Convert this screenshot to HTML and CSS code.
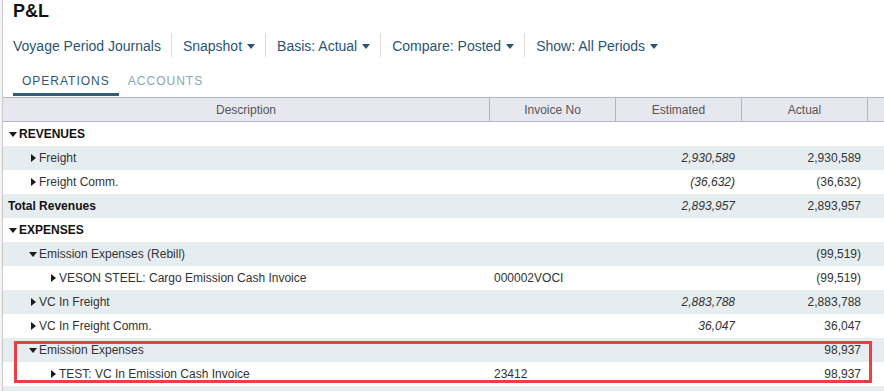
FILE: index.html
```html
<!DOCTYPE html>
<html>
  <head>
    <meta name="viewport" content="width=device-width, initial-scale=1" />
    <link rel="stylesheet" href="styles.css">
  </head>
  <body>
    <div class="page">
      <h1 class="title">P&amp;L</h1>

      <div class="toolbar">
        <span class="tool">Voyage Period Journals</span>
        <span class="tool">Snapshot <i class="caret"></i></span>
        <span class="tool">Basis: Actual <i class="caret"></i></span>
        <span class="tool">Compare: Posted <i class="caret"></i></span>
        <span class="tool">Show: All Periods <i class="caret"></i></span>
      </div>

      <div class="tabs">
        <span class="tab active">OPERATIONS</span>
        <span class="tab">ACCOUNTS</span>
      </div>

      <div class="grid">
        <div class="row head">
          <span class="c">Description</span>
          <span class="c">Invoice No</span>
          <span class="c">Estimated</span>
          <span class="c">Actual</span>
          <span class="c gut"></span>
        </div>

        <div class="row section">
          <span class="c desc lv0"><i class="tri down"></i>REVENUES</span>
          <span class="c inv"></span><span class="c est"></span><span class="c act"></span><span class="c gut"></span>
        </div>
        <div class="row">
          <span class="c desc lv1"><i class="tri right"></i>Freight</span>
          <span class="c inv"></span><span class="c est">2,930,589</span><span class="c act">2,930,589</span><span class="c gut"></span>
        </div>
        <div class="row">
          <span class="c desc lv1"><i class="tri right"></i>Freight Comm.</span>
          <span class="c inv"></span><span class="c est">(36,632)</span><span class="c act">(36,632)</span><span class="c gut"></span>
        </div>
        <div class="row total">
          <span class="c desc">Total Revenues</span>
          <span class="c inv"></span><span class="c est">2,893,957</span><span class="c act">2,893,957</span><span class="c gut"></span>
        </div>
        <div class="row section">
          <span class="c desc lv0"><i class="tri down"></i>EXPENSES</span>
          <span class="c inv"></span><span class="c est"></span><span class="c act"></span><span class="c gut"></span>
        </div>
        <div class="row">
          <span class="c desc lv1"><i class="tri down"></i>Emission Expenses (Rebill)</span>
          <span class="c inv"></span><span class="c est"></span><span class="c act">(99,519)</span><span class="c gut"></span>
        </div>
        <div class="row">
          <span class="c desc lv2"><i class="tri right"></i>VESON STEEL: Cargo Emission Cash Invoice</span>
          <span class="c inv">000002VOCI</span><span class="c est"></span><span class="c act">(99,519)</span><span class="c gut"></span>
        </div>
        <div class="row">
          <span class="c desc lv1"><i class="tri right"></i>VC In Freight</span>
          <span class="c inv"></span><span class="c est">2,883,788</span><span class="c act">2,883,788</span><span class="c gut"></span>
        </div>
        <div class="row">
          <span class="c desc lv1"><i class="tri right"></i>VC In Freight Comm.</span>
          <span class="c inv"></span><span class="c est">36,047</span><span class="c act">36,047</span><span class="c gut"></span>
        </div>
        <div class="row">
          <span class="c desc lv1"><i class="tri down"></i>Emission Expenses</span>
          <span class="c inv"></span><span class="c est"></span><span class="c act">98,937</span><span class="c gut"></span>
        </div>
        <div class="row">
          <span class="c desc lv2"><i class="tri right"></i>TEST: VC In Emission Cash Invoice</span>
          <span class="c inv">23412</span><span class="c est"></span><span class="c act">98,937</span><span class="c gut"></span>
        </div>
        <div class="row">
          <span class="c desc"></span>
          <span class="c inv"></span><span class="c est"></span><span class="c act"></span><span class="c gut"></span>
        </div>

        <div class="mark"></div>
      </div>
    </div>
  </body>
</html>
```

FILE: styles.css
```css
* {
  box-sizing: border-box;
}

body {
  margin: 0;
  background: #f3f3f3;
  font-family: "Liberation Sans", Arial, sans-serif;
  color: #333;
  height: 391px;
  overflow: hidden;
}

.page {
  margin-left: 2px;
  border-left: 1px solid #c9c9c9;
  background: #fff;
  min-height: 391px;
}

.title {
  margin: 0;
  padding-left: 10px;
  font-size: 18px;
  line-height: 22px;
  font-weight: bold;
  color: #111;
}

/* toolbar */
.toolbar {
  display: flex;
  margin-top: 11px;
  padding-left: 10px;
}

.tool {
  display: flex;
  align-items: center;
  height: 24px;
  padding: 2px 10px 0 11px;
  border-left: 1px solid #dcdcdc;
  font-size: 14px;
  color: #2b5573;
}

.tool:first-child {
  border-left: none;
  padding-left: 0;
}

.caret {
  display: inline-block;
  margin-left: 5px;
  border-left: 4px solid transparent;
  border-right: 4px solid transparent;
  border-top: 5px solid #2b5573;
}

/* tabs */
.tabs {
  display: flex;
  margin-top: 17px;
  padding-left: 10px;
}

.tab {
  padding: 0 9px 5px;
  font-size: 12px;
  line-height: 14px;
  letter-spacing: 1px;
  color: #8ba4b6;
  border-bottom: 3px solid transparent;
}

.tab.active {
  color: #2f5874;
  border-bottom-color: #2f5f7b;
}

/* grid */
.grid {
  position: relative;
  margin-top: 1px;
  font-size: 12px;
}

.row {
  display: grid;
  grid-template-columns: 487px 126px 126px 126px 1fr;
  height: 24px;
  align-items: center;
}

.row:nth-child(odd) {
  background: #e6edf1;
}

.row.head {
  height: 25px;
  background: #e7e7f0;
  border-top: 1px solid #b3b1cf;
  border-bottom: 1px solid #b3b1cf;
  color: #555;
}

.row.head .c {
  height: 100%;
  display: flex;
  align-items: center;
  justify-content: center;
  border-right: 1px solid #b3b1cf;
}

.row.head .gut {
  border-right: none;
}

.c {
  white-space: nowrap;
  overflow: hidden;
}

.desc {
  display: flex;
  align-items: center;
  padding-left: 5px;
}

.lv0 {
  padding-left: 6px;
}

.lv1 {
  padding-left: 26px;
}

.lv2 {
  padding-left: 46px;
}

.inv {
  padding-left: 4px;
}

.est,
.act {
  text-align: right;
  padding-right: 7px;
}

.est {
  font-style: italic;
}

.section .desc,
.total .desc {
  font-weight: bold;
  color: #111;
}

.tri {
  display: inline-block;
  width: 10px;
  height: 9px;
  position: relative;
  flex: none;
}

.tri.down::before {
  content: "";
  position: absolute;
  left: 0;
  top: 2px;
  border-left: 4.5px solid transparent;
  border-right: 4.5px solid transparent;
  border-top: 5px solid #1a1a1a;
}

.tri.right::before {
  content: "";
  position: absolute;
  left: 2px;
  top: 0;
  border-top: 4.5px solid transparent;
  border-bottom: 4.5px solid transparent;
  border-left: 5px solid #1a1a1a;
}

.mark {
  position: absolute;
  left: 11px;
  top: 244px;
  width: 858px;
  height: 42px;
  border: 3px solid #ef3e43;
  pointer-events: none;
}
```
